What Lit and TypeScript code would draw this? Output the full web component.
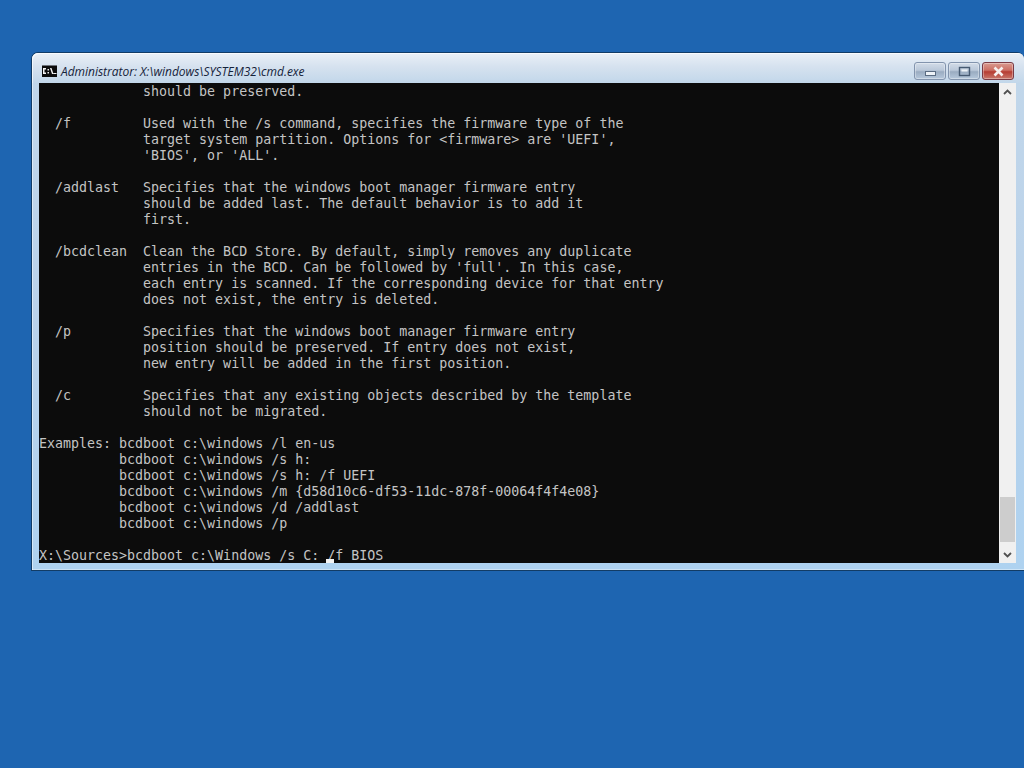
import { LitElement, html, css } from "lit";
import { customElement } from "lit/decorators.js";

const LINES = [
  "             should be preserved.",
  "",
  "  /f         Used with the /s command, specifies the firmware type of the",
  "             target system partition. Options for <firmware> are 'UEFI',",
  "             'BIOS', or 'ALL'.",
  "",
  "  /addlast   Specifies that the windows boot manager firmware entry",
  "             should be added last. The default behavior is to add it",
  "             first.",
  "",
  "  /bcdclean  Clean the BCD Store. By default, simply removes any duplicate",
  "             entries in the BCD. Can be followed by 'full'. In this case,",
  "             each entry is scanned. If the corresponding device for that entry",
  "             does not exist, the entry is deleted.",
  "",
  "  /p         Specifies that the windows boot manager firmware entry",
  "             position should be preserved. If entry does not exist,",
  "             new entry will be added in the first position.",
  "",
  "  /c         Specifies that any existing objects described by the template",
  "             should not be migrated.",
  "",
  "Examples: bcdboot c:\\windows /l en-us",
  "          bcdboot c:\\windows /s h:",
  "          bcdboot c:\\windows /s h: /f UEFI",
  "          bcdboot c:\\windows /m {d58d10c6-df53-11dc-878f-00064f4f4e08}",
  "          bcdboot c:\\windows /d /addlast",
  "          bcdboot c:\\windows /p",
  "",
  "X:\\Sources>bcdboot c:\\Windows /s C: /f BIOS",
];

@customElement("app-root")
export class AppRoot extends LitElement {
  static styles = css`
    :host {
      display: block;
      width: 1024px;
      height: 768px;
      overflow: hidden;
      background: #1e65b1;
      padding: 52px 0 0 31px;
      box-sizing: border-box;
    }
    .window {
      width: 993px;
      height: 519px;
      box-sizing: border-box;
      border: 1px solid #123c66;
      border-right: none;
      border-radius: 7px 7px 0 0;
      background: linear-gradient(180deg, #c2d7ea 0%, #bad2ea 50%, #aed2f0 100%);
      display: flex;
      flex-direction: column;
      box-shadow: inset 1px 0 0 rgba(255, 255, 255, 0.5), inset 0 -1px 0 rgba(255, 255, 255, 0.4);
    }
    .titlebar {
      height: 30px;
      flex: none;
      box-sizing: border-box;
      display: flex;
      align-items: center;
      padding: 6px 10px 0 10px;
      background: linear-gradient(180deg, #eaf0f7 0%, #d6e2ef 45%, #c2d7ea 100%);
      border-radius: 6px 6px 0 0;
      box-shadow: inset 1px 1px 0 rgba(255, 255, 255, 0.7);
    }
    .appicon {
      width: 15px;
      height: 12px;
      flex: none;
      margin-right: 4px;
      display: block;
    }
    .title {
      font: italic 12px "Open Sans", "Noto Sans", sans-serif;
      color: #15233a;
      white-space: pre;
      letter-spacing: -0.02px;
    }
    .controls {
      margin-left: auto;
      display: flex;
      gap: 2px;
    }
    .btn {
      width: 32px;
      height: 18px;
      box-sizing: border-box;
      border: 1px solid #8294ad;
      border-radius: 3px;
      display: flex;
      align-items: center;
      justify-content: center;
      background: linear-gradient(180deg, #d2dce8 0%, #bac8d9 45%, #9aacc1 55%, #b6c8dc 100%);
      box-shadow: inset 0 0 0 1px rgba(255, 255, 255, 0.35);
    }
    .btn.close {
      border-color: #7a3a44;
      background: linear-gradient(180deg, #d99a90 0%, #cc6f64 45%, #b63d33 55%, #c9786c 100%);
    }
    .body {
      display: flex;
      height: 480px;
      flex: none;
      margin: 0 8px 0 7px;
    }
    .console {
      width: 960px;
      flex: none;
      box-sizing: border-box;
      padding-top: 1px;
      background: #0c0c0c;
      color: #c4c4c4;
      font: 13.3px/16px "DejaVu Sans Mono", monospace;
      white-space: pre;
      overflow: hidden;
      position: relative;
    }
    .row {
      display: block;
      height: 16px;
    }
    .cursor {
      position: absolute;
      left: 287px;
      top: 476px;
      width: 8px;
      height: 4px;
      background: #f2f2f2;
    }
    .scroll {
      width: 17px;
      flex: none;
      background: #f0f0f0;
      display: flex;
      flex-direction: column;
    }
    .arrow {
      height: 17px;
      flex: none;
      display: flex;
      align-items: center;
      justify-content: center;
    }
    .track {
      flex: 1;
      display: flex;
      flex-direction: column;
      justify-content: flex-end;
    }
    .thumb {
      height: 45px;
      margin: 0 1px 4px;
      background: #cdcdcd;
    }
  `;

  render() {
    return html`
      <div class="window">
        <div class="titlebar">
          <svg class="appicon" viewBox="0 0 15 12">
            <rect width="15" height="12" fill="#0c0c0c"></rect>
            <rect width="15" height="1" fill="#6f747b"></rect>
            <path d="M1 3h3v1.5H2.5v3H4V9H1zM5.5 4h1.5v1.5H5.5zM5.5 7h1.5v1.5H5.5zM8 3h1.5l2 6H10zM11.5 8h3v1h-3z" fill="#f4f4f4"></path>
          </svg>
          <span class="title">Administrator: X:\\windows\\SYSTEM32\\cmd.exe</span>
          <div class="controls">
            <div class="btn">
              <svg width="13" height="9" viewBox="0 0 13 9"><rect x="1.5" y="4.5" width="10" height="4" fill="#eef3f8" stroke="#5a6c82"></rect></svg>
            </div>
            <div class="btn">
              <svg width="13" height="11" viewBox="0 0 13 11"><rect x="1.5" y="1.5" width="10" height="8" fill="none" stroke="#465a72" stroke-width="1.4"></rect><rect x="3.5" y="3.5" width="6" height="2" fill="#eef3f8"></rect></svg>
            </div>
            <div class="btn close">
              <svg width="13" height="11" viewBox="0 0 13 11"><path d="M2.5 1.5l8 8M10.5 1.5l-8 8" stroke="#f6efee" stroke-width="2.6" fill="none"></path></svg>
            </div>
          </div>
        </div>
        <div class="body">
          <div class="console">${LINES.map((l) => html`<span class="row">${l}</span>`)}<div class="cursor"></div></div>
          <div class="scroll">
            <div class="arrow"><svg width="9" height="6" viewBox="0 0 9 6"><path d="M1 5l3.5-3.5L8 5" fill="none" stroke="#505050" stroke-width="1.8"></path></svg></div>
            <div class="track"><div class="thumb"></div></div>
            <div class="arrow"><svg width="9" height="6" viewBox="0 0 9 6"><path d="M1 1l3.5 3.5L8 1" fill="none" stroke="#505050" stroke-width="1.8"></path></svg></div>
          </div>
        </div>
      </div>
    `;
  }
}
